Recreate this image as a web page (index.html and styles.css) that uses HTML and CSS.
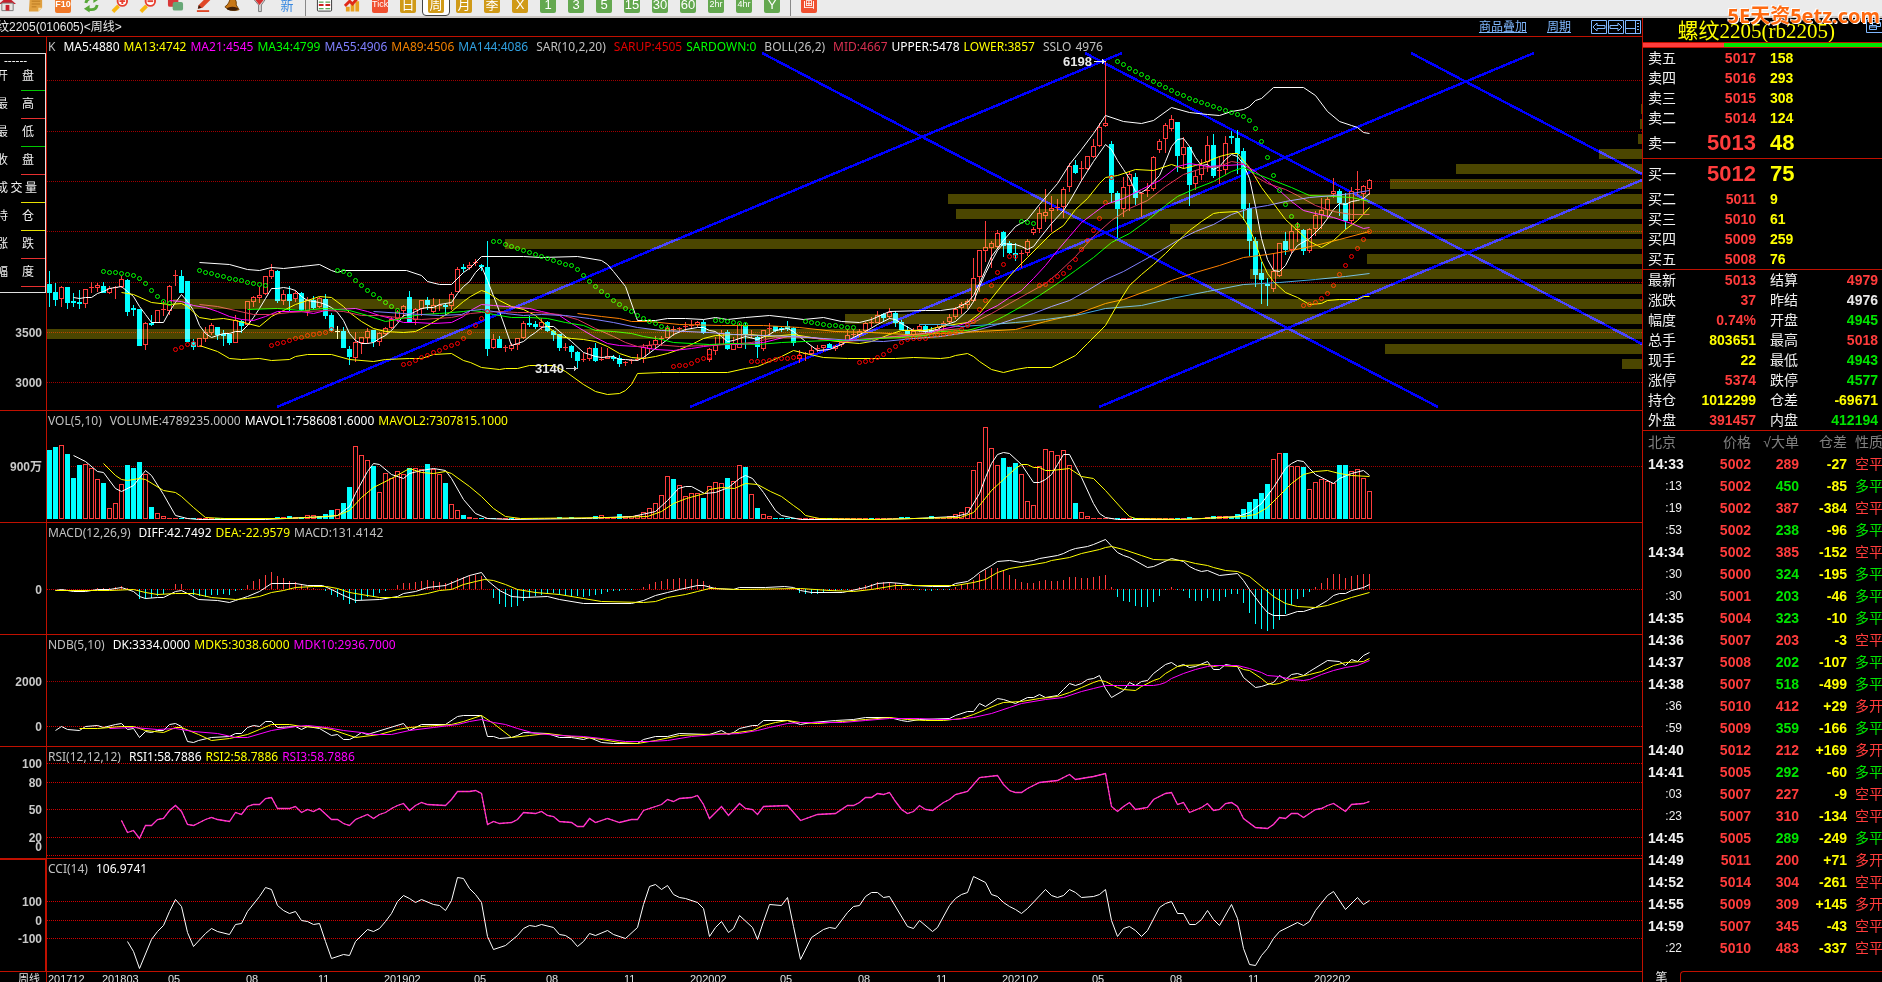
FILE: index.html
```html
<!DOCTYPE html>
<html lang="zh-CN">
<head>
<meta charset="utf-8">
<title>螺纹2205 周线</title>
<link rel="stylesheet" href="styles.css">
</head>
<body>
<div class="app">
  <nav class="toolbar" aria-label="工具栏">
    <button class="tool" aria-label="首页"><svg viewBox="0 0 18 18"><path d="M0 9 9 1l9 8z" fill="#c8202c"/><path d="M3 8h12v8H3z" fill="#e8e4e0" stroke="#777"/><path d="M7 10h4v6H7z" fill="#c8202c"/></svg></button>
    <button class="tool" aria-label="记事"><svg viewBox="0 0 18 18"><path d="M3 1h13v12l-4 4H2z" fill="#e0a040"/><path d="M12 17v-4h4z" fill="#f8dca0"/><path d="M5 6h9M5 9h9M5 12h5" stroke="#b87820"/></svg></button>
    <button class="tool" aria-label="F10"><span class="tile orange small">F10</span></button>
    <button class="tool" aria-label="刷新"><svg viewBox="0 0 18 18"><path d="M3 8Q4 3 9 3h4M15 10q-1 5-6 5H5" fill="none" stroke="#58a838" stroke-width="3"/><path d="m11 0 6 4-6 4zM7 10l-6 4 6 4z" fill="#58a838"/></svg></button>
    <button class="tool" aria-label="放大"><svg viewBox="0 0 18 18"><path d="m2 17 6-6" stroke="#f8b810" stroke-width="4"/><circle cx="12" cy="6" r="5" fill="#fff" stroke="#e84030" stroke-width="2"/><path d="M9 6h6M12 3v6" stroke="#e84030" stroke-width="2"/></svg></button>
    <button class="tool" aria-label="缩小"><svg viewBox="0 0 18 18"><path d="m2 17 6-6" stroke="#f8b810" stroke-width="4"/><circle cx="12" cy="6" r="5" fill="#fff" stroke="#e84030" stroke-width="2"/><path d="M9 6h6" stroke="#e84030" stroke-width="2"/></svg></button>
    <button class="tool" aria-label="叠加"><svg viewBox="0 0 18 18"><rect x="1" y="1" width="11" height="11" rx="2" fill="#d83838"/><rect x="6" y="7" width="11" height="9" rx="2" fill="#68a878"/></svg></button>
    <button class="tool" aria-label="画线"><svg viewBox="0 0 18 18"><path d="m3 14 1-4 9-9 4 3-9 9z" fill="#e04828"/><path d="m3 14 1-4 3 3z" fill="#402010"/><path d="M2 16.500h13" stroke="#e04828" stroke-width="2"/></svg></button>
    <button class="tool" aria-label="预警"><svg viewBox="0 0 18 18"><path d="M8 1q7 2 6 9l3 5q-9 3-15-3 5-3 6-11z" fill="#c87818" stroke="#704008"/><ellipse cx="10" cy="14" rx="6" ry="2" fill="#402008"/></svg></button>
    <button class="tool" aria-label="筛选"><svg viewBox="0 0 18 18"><path d="M2 3h14l-5 7v7H8v-7z" fill="#d8d8d8" stroke="#777"/><path d="M4 4h10l-5 6z" fill="#d83030"/></svg></button>
    <button class="tool" aria-label="新"><span class="new">新</span></button>
    <i class="sep"></i>
    <button class="tool" aria-label="报价表"><svg viewBox="0 0 18 18"><rect x="1.500" y="0.500" width="15" height="16" rx="1" fill="#fff" stroke="#333"/><path d="M2 2h14" stroke="#333" stroke-width="3"/><path d="M3 7h5M10 7h5" stroke="#282"/><path d="M3 10h5M10 10h5" stroke="#c22" stroke-width="2"/><path d="M3 14h5M10 14h5" stroke="#282"/></svg></button>
    <button class="tool" aria-label="走势图"><svg viewBox="0 0 18 18"><path d="M2 12h4v5H2zM7 9h4v8H7zM12 6h4v11h-4z" fill="#e8a020"/><path d="m1 11 5-5 3 3 7-8" fill="none" stroke="#e02818" stroke-width="3"/></svg></button>
    <button class="tool"><span class="tile red">Tick</span></button>
    <button class="tool"><span class="tile gold">日</span></button>
    <button class="tool selected" aria-pressed="true"><span class="tile gold">周</span></button>
    <button class="tool"><span class="tile gold">月</span></button>
    <button class="tool"><span class="tile gold">季</span></button>
    <button class="tool"><span class="tile gold">X</span></button>
    <button class="tool"><span class="tile green">1</span></button>
    <button class="tool"><span class="tile green">3</span></button>
    <button class="tool"><span class="tile green">5</span></button>
    <button class="tool"><span class="tile green">15</span></button>
    <button class="tool"><span class="tile green">30</span></button>
    <button class="tool"><span class="tile green">60</span></button>
    <button class="tool"><span class="tile green small">2hr</span></button>
    <button class="tool"><span class="tile green small">4hr</span></button>
    <button class="tool"><span class="tile green">Y</span></button>
    <i class="sep"></i>
    <button class="tool"><span class="tile red wide">画</span></button>
  </nav>
  <div class="brand">5E天资5etz.com</div>

  <main class="charts">
    <header class="charthead">
      <h1>纹2205(010605)&lt;周线&gt;</h1>
      <a href="#overlay" class="overlay">商品叠加</a>
      <a href="#period">周期</a>
      <div class="heads">
        <button aria-label="向左"><svg viewBox="0 0 16 14"><path d="M.5.5h15v13H.5zM2 7l4-4v2.500h8v3H6V11z"/></svg></button>
        <button aria-label="向右"><svg viewBox="0 0 16 14"><path d="M.5.5h15v13H.5zM14 7l-4-4v2.500H2v3h8V11z"/></svg></button>
        <button aria-label="布局"><svg viewBox="0 0 16 14"><path d="M.5.5h15v13H.5zM10.500.5v13M.5 8.500h10M12 3.500h2M12 6.500h2M12 9.500h2"/></svg></button>
      </div>
    </header>

    <section class="panel price" id="price">
      <p class="legend"><span>K</span><span class="w gap">MA5:4880</span><span class="y">MA13:4742</span><span class="m">MA21:4545</span><span class="g">MA34:4799</span><span class="p">MA55:4906</span><span class="o">MA89:4506</span><span class="b">MA144:4086</span><span class="gap name">SAR(10,2,20)</span><span class="r">SARUP:4505</span><span class="g">SARDOWN:0</span><span class="gap name">BOLL(26,2)</span><span class="c">MID:4667</span><span class="w">UPPER:5478</span><span class="y">LOWER:3857</span><span class="gap">SSLO</span><span>4976</span></p>
      <aside class="databox">
        <p class="none">------</p>
        <div class="cell green"><span>开</span><span>盘</span></div>
        <div class="cell red"><span>最</span><span>高</span></div>
        <div class="cell green"><span>最</span><span>低</span></div>
        <div class="cell red"><span>收</span><span>盘</span></div>
        <div class="cell yellow three"><span>成</span><span>交</span><span>量</span></div>
        <div class="cell yellow"><span>持</span><span>仓</span></div>
        <div class="cell red"><span>涨</span><span>跌</span></div>
        <div class="cell red"><span>幅</span><span>度</span></div>
      </aside>
    </section>
    <section class="panel" id="vol"><p class="legend"><span class="name">VOL(5,10)</span><span>VOLUME:4789235.0000</span><span class="w">MAVOL1:7586081.6000</span><span class="y">MAVOL2:7307815.1000</span></p></section>
    <section class="panel" id="macd"><p class="legend"><span class="name">MACD(12,26,9)</span><span class="w">DIFF:42.7492</span><span class="y">DEA:-22.9579</span><span>MACD:131.4142</span></p></section>
    <section class="panel" id="ndb"><p class="legend"><span class="name">NDB(5,10)</span><span class="w">DK:3334.0000</span><span class="y">MDK5:3038.6000</span><span class="m">MDK10:2936.7000</span></p></section>
    <section class="panel" id="rsi"><p class="legend"><span class="name">RSI(12,12,12)</span><span class="w">RSI1:58.7886</span><span class="y">RSI2:58.7886</span><span class="m">RSI3:58.7886</span></p></section>
    <section class="panel last" id="cci"><p class="legend"><span class="name">CCI(14)</span><span class="w">106.9741</span></p></section>
    <footer class="panel dates" id="dates"></footer>
  </main>

  <aside class="quote">
    <header class="quotehead"><h2>螺纹2205(rb2205)</h2><button aria-label="窗口"><svg viewBox="0 0 16 14"><path d="M.5.500h17v13H.5zM3.500 6.500h7v4h-7zM3.500 8h7M6.500 6V3.500h8v4h-4"/></svg></button></header>
    <div class="ratio"><i></i></div>
    <table class="book">
      <tbody>
      <tr><th>卖五</th><td>5017</td><td>158</td></tr>
      <tr><th>卖四</th><td>5016</td><td>293</td></tr>
      <tr><th>卖三</th><td>5015</td><td>308</td></tr>
      <tr><th>卖二</th><td>5014</td><td>124</td></tr>
      <tr class="big"><th>卖一</th><td>5013</td><td>48</td></tr>
      </tbody>
    </table>
    <table class="book">
      <tbody>
      <tr class="big"><th>买一</th><td>5012</td><td>75</td></tr>
      <tr><th>买二</th><td>5011</td><td>9</td></tr>
      <tr><th>买三</th><td>5010</td><td>61</td></tr>
      <tr><th>买四</th><td>5009</td><td>259</td></tr>
      <tr><th>买五</th><td>5008</td><td>76</td></tr>
      </tbody>
    </table>
    <table class="stats">
      <tbody>
      <tr><th>最新</th><td class="up">5013</td><th>结算</th><td class="up">4979</td></tr>
      <tr><th>涨跌</th><td class="up">37</td><th>昨结</th><td class="flat">4976</td></tr>
      <tr><th>幅度</th><td class="up">0.74%</td><th>开盘</th><td class="down">4945</td></tr>
      <tr><th>总手</th><td class="num">803651</td><th>最高</th><td class="up">5018</td></tr>
      <tr><th>现手</th><td class="num">22</td><th>最低</th><td class="down">4943</td></tr>
      <tr><th>涨停</th><td class="up">5374</td><th>跌停</th><td class="down">4577</td></tr>
      <tr><th>持仓</th><td class="num">1012299</td><th>仓差</th><td class="num">-69671</td></tr>
      <tr><th>外盘</th><td class="up">391457</td><th>内盘</th><td class="down">412194</td></tr>
      </tbody>
    </table>
    <div class="ticks">
      <table>
        <thead><tr><th>北京</th><th>价格</th><th>√大单</th><th>仓差</th><th>性质</th></tr></thead>
        <tbody id="ticks"></tbody>
      </table>
    </div>
    <footer class="tabs"><button>笔</button><i></i></footer>
  </aside>
</div>
<script src="chart.js"></script>
</body>
</html>
```

FILE: styles.css
```css
* { box-sizing: border-box; }
html, body { height: 100%; margin: 0; }
body {
  background: #000;
  color: #c0c0c0;
  font: 12px/16px "Noto Sans", "Noto Sans CJK SC", sans-serif;
  overflow: hidden;
}
h1, h2, p { margin: 0; font-weight: 400; }
button { margin: 0; padding: 0; border: 0; background: none; color: inherit; font: inherit; }
table { border-collapse: collapse; border-spacing: 0; }
th, td { padding: 0; text-align: left; }

.app {
  position: relative;
  display: grid;
  grid-template: 18px 1fr / 1fr 240px;
  height: 100vh;
}

/* toolbar */
.toolbar {
  grid-column: 1 / 3;
  display: flex;
  align-items: flex-end;
  margin-left: -7px;
  background: #ebebeb;
  border-bottom: 2px solid #ccc8c4;
  overflow: hidden;
}
.tool {
  flex: none;
  display: flex;
  align-items: flex-end;
  justify-content: center;
  width: 28px;
  height: 22px;
  padding-bottom: 3px;
}
.tool svg { width: 17px; height: 18px; }
.tool.selected { background: #fff; border: 1px solid #444; border-radius: 4px; padding-bottom: 2px; }
.tile {
  width: 16px;
  height: 17px;
  border-radius: 2px;
  color: #fff;
  font: 13px/17px "Liberation Sans", "Noto Sans CJK SC", sans-serif;
  text-align: center;
}
.tile.gold { background: #d09a18; }
.tile.green { background: #64a850; }
.tile.red { background: #f05030; font-size: 9px; }
.tile.wide { font-size: 12px; }
.tile.orange { background: #f07828; font-weight: 700; }
.tile.small { font-size: 9px; }
.new { color: #3888e0; font-size: 13px; line-height: 16px; }
.sep { flex: none; width: 1px; height: 16px; margin: 0 4px; background: #888; }

.brand {
  position: absolute;
  top: 2px;
  right: 2px;
  z-index: 2;
  color: #ff6a10;
  font: 700 20px/28px "Noto Sans", "Noto Sans CJK SC", sans-serif;
  text-shadow: 1px 1px #fff, -1px -1px #fff;
}

/* charts column */
.charts { display: flex; flex-direction: column; min-width: 0; overflow: hidden; }
.charthead {
  flex: none;
  display: flex;
  align-items: center;
  gap: 20px;
  height: 19px;
  border-bottom: 1px solid #c01000;
}
.charthead h1 {
  margin-left: -3px;
  color: #e8e8e8;
  font: 12px/18px "Liberation Sans", "Noto Sans CJK SC", sans-serif;
}
.charthead a { color: #80b8ff; text-decoration: underline; }
.charthead .overlay { margin-left: auto; }
.heads { display: flex; gap: 1px; padding-right: 1px; }
.heads svg, .quotehead svg { display: block; width: 16px; height: 14px; fill: none; stroke: #80b8ff; }

.panel { position: relative; flex: none; height: 112px; border-bottom: 1px solid #c01000; overflow: hidden; }
.panel.price { flex: 1; }
.panel.last { height: 113px; }
.panel.dates { height: 10px; border: 0; }
.panel > svg { position: absolute; inset: 0; width: 100%; height: 100%; }
.legend {
  position: relative;
  z-index: 1;
  display: flex;
  gap: 4px;
  padding: 2px 0 0 48px;
  white-space: nowrap;
}
.gap { margin-left: 4px; }
.name { margin-right: 4px; }
.w { color: #fff; }
.y { color: #ff0; }
.m { color: #f0f; }
.g { color: #0f0; }
.p { color: #8080ff; }
.o { color: #f08000; }
.b { color: #30a0e0; }
.r { color: #e00000; }
.c { color: #d83050; }

.axis { fill: #c8c8c8; font: 700 12px "Liberation Sans", "Noto Sans CJK SC", sans-serif; text-anchor: end; }
.mark { fill: #e8e8e8; font: 700 13px "Liberation Sans", sans-serif; text-anchor: end; }
.date { fill: #e0e0e0; font: 11px "Liberation Sans", "Noto Sans CJK SC", sans-serif; }
.profile { mix-blend-mode: screen; fill: #4b4600; }

.databox {
  position: absolute;
  top: 16px;
  left: 0;
  z-index: 1;
  width: 46px;
  background: #000;
  border: solid #e0e0e0;
  border-width: 1px 1px 1px 0;
  color: #f0f0f0;
  overflow: hidden;
}
.none { padding-left: 4px; line-height: 14px; }
.cell { display: flex; justify-content: space-between; height: 28px; margin-left: -4px; padding-right: 11px; position: relative; }
.cell.three { padding-right: 8px; }
.cell::after { content: ""; position: absolute; right: 0; bottom: 5px; width: 24px; border-bottom: 1px solid; }
.cell.green::after { color: #00c800; }
.cell.red::after { color: #e83030; }
.cell.yellow::after { color: #e8e000; }

/* quote column */
.quote {
  display: flex;
  flex-direction: column;
  border-left: 1px solid #c01000;
  overflow: hidden;
  font: 700 14px/20px "Liberation Sans", "Noto Sans CJK SC", sans-serif;
}
.quotehead { flex: none; display: flex; justify-content: flex-end; height: 24px; overflow: hidden; }
.quotehead h2 { margin-right: 31px; color: #ff0; font: 21px/26px "Liberation Serif", "Noto Sans CJK SC", serif; white-space: nowrap; }
.quotehead button { width: 16px; align-self: flex-start; margin-top: 1px; }
.ratio { flex: none; height: 6px; border: solid #c01000; border-width: 1px 0; background: #00e400; }
.ratio i { display: block; width: 34%; height: 4px; background: #ff3c3c; }
.quote table { width: 100%; table-layout: fixed; }
.quote th { color: #f0f0f0; font-weight: 400; }
.book, .stats { border-bottom: 1px solid #c01000; }
.quote tr { height: 20px; }
.quote .big { height: 30px; }
.big td { font-size: 22px; }
.book th { width: 33px; padding-left: 5px; }
.book td:nth-child(2) { width: 80px; text-align: right; color: #ff3c3c; }
.book td:nth-child(3) { padding-left: 14px; color: #ff0; }
.stats td { text-align: right; }
.stats th:first-child { width: 34px; padding-left: 5px; }
.stats td:nth-child(2) { width: 79px; }
.stats th:nth-child(3) { width: 44px; padding-left: 14px; }
.stats td:last-child { padding-right: 4px; }
.up { color: #ff3c3c; }
.down { color: #00e400; }
.num { color: #ff0; }
.flat { color: #e8e8e8; }

.ticks { flex: 1; }
.ticks table { white-space: nowrap; }
.quote .ticks tr { height: 22px; }
.quote .ticks th { color: #808080; text-align: right; }
.ticks th:first-child { width: 43px; padding-left: 5px; }
.ticks th:nth-child(2) { width: 65px; }
.ticks th:nth-child(3) { width: 48px; }
.ticks th:nth-child(4) { width: 48px; }
.ticks th:last-child { padding-left: 8px; }
.quote .ticks th:first-child, .quote .ticks th:last-child { text-align: left; }
.ticks td { text-align: right; }
.ticks td:first-child { padding-left: 5px; text-align: left; color: #f0f0f0; }
.ticks td.sec:first-child { padding-right: 4px; font-size: 12px; font-weight: 400; text-align: right; }
.ticks td:last-child { padding-left: 8px; font-weight: 400; text-align: left; }

.tabs { flex: none; display: flex; height: 11px; }
.tabs button { width: 37px; color: #e8e8e8; font-size: 12px; font-weight: 400; line-height: 14px; align-self: flex-start; }
.tabs i { flex: 1; border: solid #c01000; border-width: 1px 0 0 1px; border-radius: 4px 0 0 0; }
```

FILE: chart.js
```js
const RED = '#ff3c3c', CYAN = '#00ffff';
const barX = i => 49.5 + 6 * i;

// Traces are stored per tile: sample units per pixel on each axis plus the tile's origin.
const TILES = {
  A: { x: 0, y: 0, sx: 3 },
  B: { x: 470, y: 230, sx: 3 },
  C: { x: 940, y: 20, sx: 3 },
  L: { x: 0, y: 400, sx: 1.96 },
  R: { x: 800, y: 400, sx: 2.6133 },
  l: { x: 0, y: 630, sx: 1.96 },
  r: { x: 800, y: 630, sx: 2.6133 }
};

function trace(parts, color, extra = '') {
  const pts = [];
  for (const [tile, text] of Object.entries(parts)) {
    const t = TILES[tile];
    for (const pair of text.trim().split(/\s+/)) {
      const [x, y] = pair.split(',').map(Number);
      pts.push((Math.floor(t.x + x / t.sx) + 0.5) + ',' + (Math.floor(t.y + y / 3) + 0.5));
    }
  }
  return `<polyline points="${pts.join(' ')}" fill="none" stroke="${color}" shape-rendering="auto" ${extra}/>`;
}

const line = (x1, y1, x2, y2, color, w = 1) =>
  `<line x1="${x1}" y1="${y1}" x2="${x2}" y2="${y2}" stroke="${color}" stroke-width="${w}"/>`;
const grid = (ys, color = '#d00000') => ys.map(y =>
  `<line x1="47" y1="${y}.5" x2="100%" y2="${y}.5" stroke="${color}" stroke-dasharray="1 1"/>`).join('');
const labels = rows => rows.map(([y, s]) => `<text class="axis" x="42" y="${y + 5}">${s}</text>`).join('');

function mount(id, top, body, texts = '') {
  document.getElementById(id).insertAdjacentHTML('afterbegin',
    `<svg aria-hidden="true"><g transform="translate(0 ${-top})"><g shape-rendering="crispEdges">` +
    line(46.5, top, 46.5, top + 400, '#c01000') + body + `</g>${texts}</g></svg>`);
}

/* ---------- price ---------- */
// colour, body top, body bottom, high, low
const CANDLES = {
  A: [0, `c 852 879 813 920;c 876 900 850 918;r 862 896 857 920;c 861 909 861 926;c 904 908 880 920;c 906 911 870 927;r 868 911 866 923;r 862 868 847 880;r 855 863 850 876;c 858 880 847 880;r 864 880 857 882;r 862 866 858 897;r 838 862 827 865;c 840 936 838 949;c 924 930 915 948;c 927 1038 927 1038;r 970 1034 966 1049;c 968 972 945 977;r 931 968 931 968;r 927 932 902 948;r 858 932 855 945;r 824 829 809 858;c 828 879 810 879;c 843 1026 843 1026;c 1026 1041 1018 1049;r 1015 1040 1015 1040;r 996 1016 980 1025;r 976 998 968 1006;c 981 1005 980 1020;c 1001 1006 990 1037;c 1003 1028 1003 1034;r 961 1028 945 1030;c 963 978 960 1000;r 904 975 903 978;r 892 906 887 922;r 885 893 860 909;r 829 883 827 885;r 811 832 793 837;c 813 902 810 908;r 883 903 870 915;c 882 904 858 934;r 880 898 870 905;c 879 930 876 933;r 900 932 890 947;c 900 924 888 928;r 895 922 890 925;c 897 947 882 957;c 945 993 940 993;w 993 996 978 1016;c 993 1043 980 1043;c 1047 1071 1037 1095;r 1027 1073 997 1085;r 1012 1028 1012 1062;r 994 1014 984 1033;c 990 1026 990 1040;r 1000 1026 996 1037;r 985 1001 982 1006;r 956 985 952 988;r 935 956 930 965;r 919 932 915 950;c 891 966 873 966;r 927 960 924 975;r 901 926 900 948;c 900 915 891 930;r 916 935 893 943;r 914 918 897 932;c 916 920 910 945;r 881 918 876 930;r 808 876 800 876;c 802 807 792 816;r 796 803 787 809;r 787 793 778 797`],
  B: [72, `c 106 112 102 124;c 111 356 33 378;r 328 353 312 358;c 326 353 318 353;r 350 354 344 365;r 346 358 340 362;r 325 346 325 360;r 280 325 273 328;c 279 284 258 290;c 283 290 272 297;r 276 290 265 300;c 276 303 272 305;c 303 314 300 332;c 311 353 311 362;r 352 358 338 362;c 348 365 346 384;c 366 392 362 415;r 388 394 370 396;r 355 388 352 392;c 354 392 340 396;r 388 392 352 392;r 378 386 354 386;c 380 388 376 394;c 384 401 376 410;r 395 402 392 407;r 390 394 386 402;r 388 392 372 392;r 352 388 342 398;r 346 356 333 368;r 330 346 318 357;r 324 330 318 348;r 293 325 285 325;r 297 303 288 318;r 294 300 290 305;r 289 293 275 303;r 284 290 271 298;r 276 284 272 292;c 276 309 270 312;r 357 389 354 395;r 346 364 320 375;r 309 346 300 346;c 307 357 300 360;r 339 361 320 361;r 285 353 280 353;c 285 312 280 357;r 312 318 300 324;c 322 350 318 383;r 300 358 300 362;r 294 301 279 318;c 289 303 287 307;c 294 299 290 307;c 289 297 273 303;c 293 338 291 349;r 374 388 360 398;r 370 376 365 392;r 361 371 348 376;r 354 360 346 365;r 346 354 345 366;c 342 353 340 355;r 349 356 345 362;r 335 346 332 352;r 315 334 300 340;r 311 315 300 323;r 303 314 298 320;r 280 303 275 308;r 276 283 262 290;r 255 278 242 280;c 251 264 248 276;r 247 262 234 266;c 249 278 243 290;c 276 300 270 300;c 300 315 288 318;r 303 314 295 320;r 288 300 283 305;c 288 305 286 312;c 300 306 292 310;r 290 304 283 308`],
  C: [149, `r 909 922 903 930;r 892 906 882 910;r 866 892 862 898;r 852 864 846 882;r 842 854 838 868;r 775 842 714 846;r 691 772 691 815;r 682 692 603 725;r 670 683 662 745;r 640 682 630 685;c 637 678 634 710;c 670 698 664 702;c 700 706 668 722;r 700 704 690 745;r 663 698 658 708;r 628 640 620 645;r 580 628 562 638;r 577 589 508 605;r 565 574 528 636;r 562 568 538 572;r 506 562 500 593;r 437 500 430 515;c 435 459 420 463;r 444 449 424 484;r 409 448 407 450;r 379 412 358 414;r 322 379 310 380;r 310 317 125 322;c 372 518 364 550;c 519 566 514 653;r 502 566 472 592;r 461 497 457 573;c 471 533 460 555;r 519 524 515 592;r 510 517 488 530;r 412 506 407 512;r 364 391 357 398;r 316 358 308 398;r 298 328 286 334;c 307 407 305 456;r 382 406 350 448;c 381 494 378 557;r 469 493 450 509;r 436 466 418 480;r 376 426 348 456;c 375 467 342 474;r 449 456 407 492;r 370 451 348 464;c 348 355 333 372;c 354 402 330 462;c 394 568 385 600;c 565 662 550 708;c 663 766 652 800;c 759 779 727 852;c 791 795 774 857;r 754 806 700 815;r 670 769 668 772;c 664 689 636 704;r 634 690 616 702;r 628 634 607 665;c 630 692 627 706;r 627 694 624 698;r 586 628 572 648;r 571 584 535 628;r 536 569 532 596;r 514 523 474 535;c 513 549 508 588;c 550 602 520 628;r 514 602 502 612;r 508 514 454 524;r 499 523 495 582;r 481 508 478 524`]
};

function candles() {
  let out = '';
  for (const [tile, [from, text]] of Object.entries(CANDLES)) {
    text.split(';').forEach((row, k) => {
      const [kind, ...v] = row.split(' ');
      const [a, b, hi, lo] = v.map(n => Math.round(TILES[tile].y + n / 3));
      const x = barX(from + k), color = kind === 'r' ? RED : kind === 'c' ? CYAN : '#ffffc0';
      out += line(x, hi, x, lo, color);
      if (b - a < 3) out += `<rect x="${x - 2.5}" y="${a}" width="5" height="${kind === 'c' ? 2 : 1}" fill="${color}"/>`;
      else if (kind === 'c') out += `<rect x="${x - 2.5}" y="${a}" width="5" height="${b - a}" fill="${color}"/>`;
      else out += `<rect x="${x - 2}" y="${a + 0.5}" width="4" height="${b - a - 1}" fill="#000" stroke="${color}"/>`;
    });
  }
  return out;
}

const SAR = [
  ['A', 9, 0, '815 817 817 820 823 826 835 850 871 889 905 911'],
  ['A', 21, 1, '1048 1042 1033 1029'],
  ['A', 25, 0, '811 817 821 826 829 835 838 841 847 850 853 857'],
  ['A', 37, 1, '1036 1030 1027 1021 1016 1012 1007 1003 1000 997 989'],
  ['A', 48, 0, '811 814 823 841 856 871 883 895 908 919 930'],
  ['A', 59, 1, '1093 1090 1081 1073 1066 1057 1051 1042 1036 1030 1015 997 976 955 933'],
  ['B', 74, 0, '34 34 43 49 55 61 67 73 79 85 91 97 103 106 118 136 154 169 184 196 211 223 235 244 256 265 274 280 289 295'],
  ['B', 104, 1, '409 406 406 400 391 385 380'],
  ['B', 111, 0, '270 271 273 276 279 283'],
  ['B', 117, 1, '394 394 394 391 388 385 385 382 379'],
  ['B', 126, 0, '273 276 280 283 286 287 289 291 293'],
  ['B', 135, 1, '397 393 391 382 374 362 350 337 328 325 325 324 316 313'],
  ['C', 149, 1, '943 940 936 928 916 903 868 841 796 757 733 709 709'],
  ['C', 162, 0, '604 607 610'],
  ['C', 165, 1, '797 794 782 770 760 742 718 688 662 631 595 547 472'],
  ['C', 178, 0, '124 133 145 154 163 172 184 193 202 211 220 226 235 241 247 253 259 265 271 277 283 289 301 325 364 412 466 511 553 589 616'],
  ['C', 209, 1, '856 853 847 835 820 796 763 736 709 685 658 634']
];
const sarDots = SAR.map(([tile, from, up, ys]) => ys.split(' ').map((y, k) =>
  `<circle cx="${barX(from + k)}" cy="${Math.floor(TILES[tile].y + y / 3) + 0.5}" r="2" fill="none" stroke="${up ? '#ff0000' : '#00ff00'}" shape-rendering="auto"/>`).join('')).join('');

const averages =
  trace({ A: '220,891 238,896 256,892 274,891 292,880 310,873 328,866 346,862 364,860 382,873 400,888 418,918 436,943 454,967 490,967 508,933 526,908 544,883 562,903 580,930 598,975 616,1000 634,1013 652,1005 670,1001 688,1000 706,994 724,994 742,975 760,952 778,925 796,895 814,865 832,864 850,862 868,864 886,872 904,890 922,900 940,903 958,907 976,912 994,922 1012,938 1030,962 1048,1000 1066,1022 1084,1030 1102,1031 1120,1027 1138,1015 1156,1005 1174,990 1192,970 1210,945 1228,942 1246,935 1264,924 1282,922 1300,921 1318,914 1336,911 1354,908 1372,880 1390,860 1408,843 1426,818',
    B: '34,108 52,150 88,243 124,346 142,340 160,335 178,318 196,306 214,293 232,288 250,290 268,305 304,335 340,368 358,372 376,379 394,383 430,380 448,388 466,387 502,390 520,382 556,355 592,328 610,312 646,297 682,291 700,292 718,300 736,303 754,318 772,334 790,330 826,318 862,327 898,312 916,300 952,296 970,303 1006,333 1042,362 1078,358 1114,343 1150,323 1186,303 1222,283 1258,265 1276,267 1294,280 1330,300 1366,303 1402,298',
    C: '10,915 46,903 82,872 100,845 118,800 136,760 154,725 172,690 190,670 208,672 226,673 244,680 262,688 280,680 298,655 334,610 370,572 388,545 424,480 460,425 496,374 514,388 532,420 550,448 568,475 586,513 604,518 622,505 658,467 676,425 694,380 712,358 730,356 748,380 766,412 784,436 802,432 820,448 838,438 856,418 874,403 892,408 910,433 928,475 946,560 964,655 982,718 1000,750 1018,754 1036,735 1054,700 1072,675 1108,655 1144,620 1162,595 1180,568 1198,550 1216,552 1234,543 1252,540 1270,535 1288,520' }, '#fff') +
  trace({ A: '364,877 400,884 454,907 508,912 544,910 562,920 598,951 634,957 670,956 706,961 742,970 778,979 814,948 850,930 886,913 922,900 958,889 994,893 1030,920 1048,938 1084,965 1120,985 1156,994 1210,997 1246,993 1282,975 1318,955 1354,935 1390,905',
    B: '0,200 34,181 52,187 88,210 124,230 160,238 196,257 232,288 268,318 304,325 340,328 376,335 412,350 448,370 484,382 520,384 556,378 592,370 628,358 664,342 700,325 736,315 790,312 844,314 898,318 970,314 1024,322 1078,331 1132,336 1168,340 1204,335 1258,312 1294,300 1366,300',
    C: '0,918 82,908 118,880 154,835 190,790 226,748 262,713 298,675 334,640 370,615 406,568 442,535 478,490 496,473 532,466 586,448 640,452 694,434 730,445 766,437 802,425 838,410 874,400 892,401 928,443 964,503 1000,550 1036,598 1072,630 1108,665 1144,682 1180,662 1216,628 1252,600 1288,562' }, '#ff0') +
  trace({ A: '508,901 544,903 580,915 616,922 652,933 688,949 724,958 760,961 796,950 832,935 868,935 904,935 940,940 976,930 1012,928 1066,926 1102,935 1138,945 1174,955 1210,966 1246,968 1300,970 1354,967 1390,950',
    B: '0,242 34,224 70,226 106,230 178,236 214,243 268,255 304,280 340,300 376,322 412,340 448,346 502,350 556,357 610,361 664,356 700,348 754,343 808,342 880,336 952,318 1024,322 1096,330 1168,328 1240,322 1312,316 1380,308',
    C: '0,928 46,920 100,900 136,875 172,855 208,833 244,812 280,775 316,735 352,690 388,650 424,608 460,580 496,552 550,535 604,508 658,480 712,440 748,430 802,438 856,435 910,432 946,455 982,485 1018,510 1054,545 1090,570 1126,580 1180,592 1234,610 1270,624 1288,622' }, '#f0f') +
  trace({ A: '598,913 652,920 706,932 760,942 814,943 868,937 922,935 976,930 1030,933 1084,945 1138,946 1192,952 1264,957 1354,952',
    B: '0,250 34,246 88,245 142,247 196,246 268,252 322,268 376,295 430,320 466,338 502,348 556,344 628,348 700,345 772,342 844,336 916,322 988,320 1060,328 1132,335 1204,328 1276,320 1366,316',
    C: '0,932 60,925 100,908 154,880 208,850 262,820 316,790 352,760 406,708 460,650 514,600 568,565 622,540 676,500 730,462 784,445 838,440 874,424 910,430 946,470 982,490 1036,508 1072,525 1126,555 1180,575 1234,583 1288,584' }, '#d83858') +
  trace({ A: '742,928 832,926 904,930 976,924 1048,930 1102,945 1156,963 1192,957 1228,950 1264,943 1318,940 1390,935',
    B: '0,240 34,243 70,252 124,263 178,262 232,265 286,276 340,287 376,300 430,304 484,311 520,320 574,327 610,336 664,340 718,342 790,340 862,344 934,337 1000,334 1078,332 1150,330 1222,325 1294,322 1366,316',
    C: '0,935 82,932 136,915 190,890 244,858 298,825 352,790 406,750 460,712 514,668 568,640 622,600 676,555 712,528 766,505 820,485 874,455 910,443 946,460 1000,482 1054,502 1108,526 1180,528 1234,532 1288,545' }, '#0f0') +
  trace({ A: '1120,935 1210,940 1318,946 1384,942',
    B: '0,240 34,238 106,250 160,256 214,253 286,256 358,264 430,278 502,292 574,302 646,305 718,306 790,314 880,316 970,320 1060,326 1150,331 1240,333 1330,326',
    C: '0,948 60,940 118,928 172,912 226,895 280,880 334,860 388,840 442,812 496,778 550,755 604,725 658,695 712,660 766,635 820,612 874,583 928,565 982,556 1036,545 1108,532 1180,525 1234,520 1288,512' }, '#8080ff') +
  trace({ B: '322,250 394,258 448,266 484,273 538,275 628,283 754,286 880,286 988,292 1096,303 1204,306 1312,312',
    C: '0,940 60,937 118,933 226,928 316,905 406,882 496,850 550,838 640,806 694,780 766,757 838,736 910,712 982,703 1054,692 1126,677 1198,658 1288,635' }, '#ff8000') +
  trace({ B: '1348,283', C: '0,912 60,918 154,912 226,908 316,897 406,885 496,865 604,855 694,835 802,815 910,793 1018,787 1126,778 1216,770 1288,760' }, '#40a8e0') +
  trace({ A: '598,787 688,793 742,808 778,811 814,801 850,804 904,798 958,793 994,812 1012,818 1030,811 1220,811 1264,825 1282,845 1318,853 1354,853 1390,818',
    B: '0,112 34,79 160,79 214,81 322,79 394,92 412,102 430,125 466,170 502,271 556,271 592,265 646,266 700,267 736,263 772,268 826,261 898,256 952,261 1000,269 1060,262 1114,273 1168,278 1204,267 1258,245 1366,240',
    C: '0,872 46,865 82,846 100,825 118,790 154,710 190,660 226,620 262,598 298,554 352,490 388,432 424,388 460,340 496,286 550,305 604,310 640,302 694,263 748,276 802,282 838,286 874,275 910,268 928,258 946,242 964,235 1000,202 1090,202 1126,225 1162,275 1198,303 1234,315 1252,322 1270,338 1288,340' }, '#fff') +
  trace({ A: '598,1037 652,1055 688,1075 724,1078 778,1075 814,1081 868,1078 886,1069 922,1063 994,1063 1048,1078 1120,1084 1156,1078 1228,1076 1264,1075 1300,1063 1354,1060 1390,1080',
    B: '0,398 34,411 88,418 106,414 142,415 178,406 250,405 286,424 340,463 376,483 412,493 448,490 466,482 484,462 502,431 574,428 628,427 772,427 826,415 862,408 898,393 934,378 970,362 1006,371 1060,383 1132,384 1204,384 1276,384 1330,382',
    C: '0,1016 28,1013 46,1006 82,1001 100,1008 118,1025 154,1048 190,1056 226,1047 262,1042 334,1042 370,1023 406,1005 442,970 496,916 532,853 568,795 604,762 640,733 676,700 712,665 748,632 784,605 820,580 838,576 892,574 910,595 928,625 946,668 964,720 982,760 1000,785 1036,818 1072,832 1108,853 1144,850 1162,842 1198,837 1252,838 1270,830 1288,829' }, '#ff0');

const fans = [[277, 407, 1122, 53], [690, 407, 1534, 53], [1099, 407, 1642, 180], [1411, 53, 1642, 174], [1085, 53, 1642, 344], [762, 53, 1438, 407]]
  .map(l => line(...l, '#0000ff', 2.5)).join('');

const profile = [[104, 1641], [119, 1640], [134, 1638], [149, 1599], [164, 1456], [179, 1390], [194, 948], [209, 956], [224, 1170], [239, 505], [254, 1367], [269, 1250], [284, 460], [299, 173], [314, 845], [329, 47], [344, 1385], [359, 1622]]
  .map(([y, x]) => `<rect x="${x}" y="${y}" width="${1642 - x}" height="10"/>`).join('');

mount('price', 37,
  grid([80, 131, 181, 231, 282, 332, 382], '#a00000') + fans + candles() + averages + sarDots + `<g class="profile">${profile}</g>` +
  line(1094, 61.5, 1105, 61.5, '#e8e8e8') + '<path d="M1102 59v5l4-2.500z" fill="#e8e8e8"/>' +
  line(566, 368.5, 577, 368.5, '#c8c8c8') + '<path d="M574 366v5l4-2.500z" fill="#c8c8c8"/>',
  labels([[332, '3500'], [382, '3000']]) +
  '<text class="mark" x="1092" y="66">6198</text><text class="mark" x="564" y="373">3140</text>');

/* ---------- volume ---------- */
// index followed by colour+top for each consecutive bar
const VOLUME = [
  [0, 'c150 c141 r136 c162 c234 c195 r193 r205 r238 c249 r325 r310 r253 c195 c204 c186 r223 c321 r340 r349 r354 r354 c354 r354 c354 r354 r354 r354 c354 c354 c354 r354 c354 r354 r354 r354 r354 r354 c351 r352 c349 r352 c352 r346 r346 c348 c342 c331 r328 c309 c262 r139 r166 r181 c198 r277 r219 r235 r214 r223 c205 r205 r208 c192 r208 r223 c249 r313 r331 c346 r352 r354 c354 r354 c354 r354 r354 c354 r354 c354 r354 c354 r354 r354 r354 c351 r354 c351 c354 r354 r354 c348 r346 r352 r352 c342 r349 r349 r346 r337 r325 r310 r286 r229 c237 r256 r289 r280 r280 c294 r259 r247 r250 c234 r244 r196 c201 r283 c324 r343 r349 c354 c354 c354 c354'],
  [125, 'r354 r354 r354 r354 r354 c354 r354 r354 r354 r354 r354 r354 c354 r354 r354 r354 r354 c351 c351 r354 r354 c354 c348 r354 r354 r349 r343 r337 r322 r211 r187 r82 r145 r196 c174 c201 c189 r223 r304 r316 r199 r148 r154 r166 r151 r196 c309 r337 r349 r354 r354 r354 r354 c354 r354 r354 c354 r354 r354 r354 r354 r354 r354 c354 r354 c351 r354 r354 r351 c348 r348 r348 c352 c342 c328 c306 c297 c279 c252 r178 r160 c159 r199 r199 c201 r268 r247 r238 r244 r250 c195 c195 r214 r208 r235 r274']
];
const volumeBars = VOLUME.map(([from, text]) => text.split(' ').map((cell, k) => {
  const top = Math.round(400 + cell.slice(1) / 3), x = barX(from + k);
  if (cell[0] === 'c') return `<rect x="${x - 2.5}" y="${top}" width="5" height="${519 - top}" fill="${CYAN}"/>`;
  return `<rect x="${x - 2}" y="${top + 0.5}" width="4" height="${Math.max(0.1, 518 - top)}" fill="#000" stroke="${RED}"/>`;
}).join('')).join('');

mount('vol', 411, grid([466], '#a00000') + volumeBars +
  trace({ L: '144,166 167,184 191,214 203,217 226,265 238,274 262,256 285,211 297,226 320,283 344,346 367,355 390,358 520,357 600,352 640,350 662,345 685,320 697,280 720,215 732,190 744,193 767,223 791,235 803,221 826,211 850,206 873,212 885,235 908,298 932,340 955,356 1000,358 1140,355 1240,350 1285,335 1308,300 1330,265 1344,259 1356,259 1380,280 1403,277 1427,262 1450,235 1462,227 1474,235 1497,277 1520,330 1532,345',
    R: '0,357 200,357 300,355 406,350 437,340 469,280 484,232 500,190 516,162 531,157 547,160 579,193 610,247 626,247 641,238 657,223 673,193 688,163 704,163 735,232 767,310 783,340 798,351 830,357 980,358 1050,356 1143,350 1174,337 1205,310 1237,262 1268,205 1284,190 1300,182 1315,184 1331,205 1347,223 1394,250 1409,235 1441,220 1472,211 1488,227' }, '#fff') +
  trace({ L: '203,190 226,226 238,238 250,241 273,235 285,238 320,271 344,277 356,289 380,322 403,352 440,356 560,355 640,350 662,346 685,331 709,292 732,262 767,235 803,205 826,217 850,220 873,214 885,220 920,259 944,289 967,325 991,349 1020,355 1200,353 1270,348 1297,335 1320,310 1345,295 1380,280 1390,268 1415,262 1440,265 1462,250 1485,253 1510,275 1532,289 1556,315',
    R: '0,331 15,346 50,355 200,358 300,355 420,352 453,337 469,316 500,271 531,238 563,205 579,193 594,193 610,202 626,202 641,211 657,211 704,205 735,229 767,235 798,271 845,331 861,349 877,356 1000,357 1160,349 1190,342 1221,322 1253,286 1284,250 1315,223 1347,214 1378,211 1409,220 1441,226 1488,229' }, '#ff0'),
  labels([[466, '900万']]));

/* ---------- MACD ---------- */
const HIST = [
  [8, '565 565 565 562 557 565 568 596 596 595 588 582 568 552 552 568 585 589 590 585 584 583 584 572 570 556 544 538 525 516 528 534 543 546 556 562 565 566 573 585 590 600 612 609 600 591 588 580 573 568 556 549 550 546 542 540 544 547 549 544 535 530 526 526 528 568 594 612 621 621 618 603 594 588 585 580 579 585 587 590 589 590 588 585 582 577 573 573 570 569 568 561 552 546 543 537 537 534 537 538 538 543 556 562'],
  [125, '578 581 581 581 578 574 574 569 569 566 562 556 552 546 546 546 549 557 567 569 569 572 572 570 569 569 561 552 549 541 523 511 505 504 511 525 537 546 549 549 543 540 543 543 540 531 531 534 534 531 528 525 561 591 603 606 618 621 621 606 588 570 561 569 573 594 603 603 594 603 603 591 582 582 609 639 672 687 693 687 660 642 615 597 591 576 561 549 534 522 522 534 528 525 522 522']
];
const hist = HIST.map(([from, ys]) => ys.split(' ').map((y, k) =>
  line(barX(from + k), 589, barX(from + k), Math.round(400 + y / 3), y < 568 ? RED : CYAN)).join('')).join('');

mount('macd', 523, grid([589]) + hist +
  trace({ L: '109,571 120,569 144,574 167,573 191,569 214,568 238,563 262,573 273,588 285,595 309,592 320,592 344,574 356,571 367,580 390,598 426,602 450,607 462,601 485,589 508,574 520,562 532,550 579,550 602,556 632,556 650,567 673,585 697,601 744,598 779,590 791,579 814,573 838,562 873,556 897,540 920,525 944,517 955,540 979,571 1003,589 1026,592 1073,588 1097,597 1144,610 1238,610 1261,601 1285,586 1308,577 1332,568 1367,556 1379,556 1403,565 1438,569 1450,562 1500,563 1538,559 1556,561',
    R: '0,571 31,577 110,577 172,562 203,551 235,547 265,551 297,556 345,558 390,558 406,551 437,543 453,532 469,516 500,495 516,484 547,482 579,487 610,482 626,475 673,466 688,461 704,452 720,445 751,439 767,433 798,418 830,457 845,466 861,473 908,502 924,499 971,476 1002,484 1018,499 1034,509 1050,514 1065,511 1096,526 1143,520 1158,541 1174,568 1190,592 1205,616 1221,637 1237,646 1268,646 1300,634 1315,634 1347,622 1378,601 1394,587 1409,580 1425,580 1441,571 1472,561 1488,552' }, '#fff') +
  trace({ L: '109,571 191,570 214,570 262,569 285,577 309,583 344,580 380,581 415,592 462,598 485,596 508,589 532,577 556,570 579,562 614,558 640,559 661,566 685,578 709,584 744,592 779,593 814,586 838,580 861,571 885,567 908,554 932,544 950,538 967,540 991,553 1014,567 1050,577 1097,584 1144,595 1179,604 1261,606 1285,603 1308,592 1344,582 1367,573 1391,566 1450,568',
    R: '0,565 78,572 141,574 188,568 250,556 406,556 453,547 484,537 516,517 547,505 594,496 641,488 657,481 704,473 735,460 783,447 798,442 814,440 845,447 892,466 924,479 1002,481 1034,491 1065,496 1081,502 1112,511 1143,514 1174,528 1205,558 1237,588 1268,610 1300,620 1347,622 1378,616 1409,604 1441,591 1488,577' }, '#ff0'),
  labels([[589, '0']]));

/* ---------- NDB ---------- */
mount('ndb', 635, grid([681], '#a00000') + grid([726]) +
  trace({ l: '109,302 120,290 132,298 156,302 167,290 191,286 203,292 226,282 238,280 250,298 262,296 273,322 285,304 297,307 309,300 320,300 332,283 344,280 356,290 367,334 379,337 390,331 415,322 450,319 462,310 473,310 485,292 497,286 508,288 520,274 532,274 543,292 579,288 590,298 602,290 626,294 650,316 661,313 673,328 685,328 697,320 709,308 720,312 791,280 803,300 826,283 873,283 897,259 908,256 944,256 956,319 967,319 979,325 1003,322 1014,317 1026,307 1073,311 1097,322 1120,322 1144,329 1155,323 1179,337 1202,340 1250,340 1261,328 1285,319 1308,318 1332,310 1391,313 1415,301 1427,313 1438,308 1450,295 1474,286 1485,286 1497,271 1544,271',
    r: '0,283 31,277 94,272 141,268 172,262 235,262 265,270 281,273 313,268 390,265 406,256 437,244 453,244 469,220 484,229 516,205 531,208 563,220 594,202 610,202 626,193 641,202 673,196 688,178 704,160 720,166 735,160 751,149 767,146 783,137 798,175 814,202 845,181 861,157 877,166 892,154 908,151 924,131 955,104 971,97 987,110 1002,103 1018,112 1034,110 1065,95 1081,118 1096,118 1112,104 1143,109 1158,142 1190,172 1205,169 1237,157 1253,136 1268,148 1284,133 1300,130 1315,137 1331,125 1378,91 1409,94 1425,106 1441,89 1456,94 1472,77 1488,67' }, '#fff') +
  trace({ l: '156,295 191,295 238,289 262,290 285,302 320,307 344,292 356,292 390,313 415,331 450,325 485,313 508,297 532,283 567,283 590,290 626,292 650,298 697,323 744,313 779,298 803,292 826,289 885,283 908,273 944,256 967,280 1003,322 1038,316 1073,310 1120,319 1167,325 1214,338 1250,340 1285,330 1332,316 1380,313 1430,309 1474,300 1497,286 1520,276 1544,271',
    r: '0,278 45,280 110,274 172,268 235,262 281,268 328,271 374,271 422,265 453,253 484,239 516,223 531,217 579,213 626,205 673,199 704,187 735,172 767,157 783,151 798,153 814,163 830,172 845,179 877,181 892,169 924,152 939,145 955,130 987,110 1002,106 1065,104 1081,109 1096,106 1143,109 1158,117 1174,122 1205,145 1221,160 1237,163 1253,160 1284,145 1331,133 1362,124 1394,106 1425,97 1472,93 1488,85' }, '#ff0') +
  trace({ l: '214,295 262,293 309,298 344,295 380,305 426,311 462,323 485,321 532,302 579,289 602,287 640,292 673,301 709,308 732,314 767,313 803,300 850,291 897,282 920,274 944,268 967,277 991,284 1014,295 1050,311 1097,316 1144,319 1179,325 1226,334 1273,334 1308,330 1356,320 1403,312 1450,309 1485,302 1509,291 1544,280',
    r: '0,277 110,277 172,271 235,265 313,265 359,268 406,268 453,262 500,250 547,231 579,220 641,208 688,203 735,184 767,175 798,167 830,166 924,166 939,163 955,157 971,145 1002,131 1034,119 1065,109 1081,107 1143,107 1174,114 1206,126 1221,136 1253,139 1284,148 1315,152 1331,149 1362,133 1394,122 1425,113 1456,107 1488,91' }, '#f0f'),
  labels([[681, '2000'], [726, '0']]));

/* ---------- RSI ---------- */
const RSI = {
  l: '238,571 250,606 262,601 273,626 285,587 297,587 309,569 320,566 332,541 344,526 356,544 367,582 379,586 402,569 415,562 426,568 450,574 462,547 473,553 485,528 497,523 508,523 520,506 532,503 543,535 567,535 579,529 590,547 602,538 614,544 626,535 650,568 661,569 673,580 685,586 697,569 720,553 732,566 744,553 756,547 767,535 779,526 791,520 803,541 814,526 826,517 838,523 873,525 885,508 897,485 920,485 932,482 944,490 956,582 967,574 979,580 1003,577 1014,568 1026,547 1050,550 1061,544 1073,556 1085,559 1097,574 1120,577 1132,589 1144,589 1155,565 1167,577 1191,565 1214,577 1238,569 1250,568 1261,540 1297,522 1308,508 1320,514 1332,505 1356,503 1367,496 1379,523 1391,566 1415,529 1427,556 1450,520 1461,535 1474,538 1485,553 1497,528 1544,527',
  r: '0,571 45,553 94,550 125,526 141,526 156,517 172,502 188,502 203,490 219,493 235,487 250,514 265,538 281,550 297,544 313,526 328,538 345,542 374,518 390,508 406,493 437,484 469,442 516,437 531,464 547,482 563,487 579,487 594,475 626,458 673,452 704,433 720,448 767,440 798,430 814,530 830,544 845,528 861,517 877,538 908,532 924,508 955,491 971,487 987,522 1002,518 1018,547 1050,532 1065,520 1081,541 1096,538 1112,521 1128,516 1143,529 1158,565 1190,592 1221,596 1237,583 1253,562 1268,565 1284,550 1300,550 1315,562 1347,538 1362,536 1378,526 1394,520 1425,544 1441,522 1472,521 1488,514'
};
mount('rsi', 747, grid([763, 782, 809, 837, 855]) + trace(RSI, '#ff20e0', 'stroke-width="1.3"') + trace(RSI, '#ff6090', 'stroke-dasharray="2 2"'),
  labels([[763, '100'], [782, '80'], [809, '50'], [837, '20'], [846, '0']]));

/* ---------- CCI ---------- */
mount('cci', 859, grid([901, 920, 938]) + '<path d="M0 859.500h45.500v112H0" fill="none" stroke="#c01000"/>' +
  trace({ l: '250,933 262,963 273,1015 297,928 309,905 320,885 332,845 344,808 356,830 367,908 379,949 402,911 415,895 426,905 450,913 462,883 473,880 485,844 508,800 520,772 532,778 543,826 556,841 567,850 579,844 590,870 602,874 614,883 626,880 638,935 650,986 673,973 685,976 697,934 720,898 732,905 744,895 756,875 767,850 779,814 791,796 803,806 814,818 826,808 850,822 861,826 873,841 885,811 897,742 908,745 920,775 932,792 944,816 956,918 967,959 991,946 1014,916 1026,895 1038,886 1050,889 1061,883 1085,892 1097,913 1108,916 1120,928 1132,949 1144,935 1155,910 1167,916 1191,901 1202,913 1226,926 1250,893 1261,823 1273,769 1285,763 1297,778 1308,766 1320,793 1332,802 1344,805 1367,817 1379,835 1391,919 1403,892 1415,874 1427,907 1438,895 1450,856 1474,892 1485,928 1497,873 1508,823 1532,826 1544,802 1556,890',
    r: '0,988 31,921 62,898 78,892 94,895 125,847 141,829 156,826 172,799 188,787 203,787 219,802 235,799 281,889 297,895 313,871 345,905 359,892 390,826 406,805 422,793 437,787 453,739 484,757 500,793 516,799 531,816 547,829 563,838 579,850 594,835 641,778 657,796 673,802 688,796 704,778 720,787 735,802 767,799 783,793 798,778 814,872 830,919 845,895 861,889 877,902 892,919 908,901 939,832 955,820 971,814 987,850 1002,850 1018,883 1034,883 1050,868 1065,842 1081,868 1096,886 1128,823 1143,865 1158,955 1174,1003 1190,1006 1205,976 1221,955 1237,925 1253,904 1300,877 1315,886 1331,874 1347,841 1378,796 1394,784 1425,838 1456,802 1472,823 1488,811' }, '#fff'),
  labels([[901, '100'], [920, '0'], [938, '-100']]));

/* ---------- dates ---------- */
mount('dates', 972, '', '<text class="date" x="18" y="983">周线</text>' +
  [[48, '201712'], [102, '201803'], [168, '05'], [246, '08'], [318, '11'], [384, '201902'], [474, '05'], [546, '08'], [624, '11'], [690, '202002'], [780, '05'], [858, '08'], [936, '11'], [1002, '202102'], [1092, '05'], [1170, '08'], [1248, '11'], [1314, '202202']]
    .map(([x, s]) => `<text class="date" x="${x}" y="983">${s}</text>`).join(''));

/* ---------- tick list ---------- */
const TICKS = `14:33 5002 289 -27 空平 u|:13 5002 450 -85 多平 d|:19 5002 387 -384 空平 u|:53 5002 238 -96 多平 d|14:34 5002 385 -152 空平 u|:30 5000 324 -195 多平 d|:30 5001 203 -46 多平 d|14:35 5004 323 -10 多平 d|14:36 5007 203 -3 空平 u|14:37 5008 202 -107 多平 d|14:38 5007 518 -499 多平 d|:36 5010 412 +29 多开 u|:59 5009 359 -166 多平 d|14:40 5012 212 +169 多开 u|14:41 5005 292 -60 多平 d|:03 5007 227 -9 空平 u|:23 5007 310 -134 空平 u|14:45 5005 289 -249 多平 d|14:49 5011 200 +71 多开 u|14:52 5014 304 -261 空平 u|14:55 5009 309 +145 多开 u|14:59 5007 345 -43 空平 u|:22 5010 483 -337 空平 u`;
document.getElementById('ticks').innerHTML = TICKS.split('|').map(row => {
  const [t, price, lots, diff, kind, dir] = row.split(' ');
  const tone = dir === 'u' ? 'up' : 'down';
  return `<tr><td class="${t[0] === ':' ? 'sec' : 'min'}">${t}</td><td class="up">${price}</td><td class="${tone}">${lots}</td><td class="num">${diff}</td><td class="${tone}">${kind}</td></tr>`;
}).join('');
```
